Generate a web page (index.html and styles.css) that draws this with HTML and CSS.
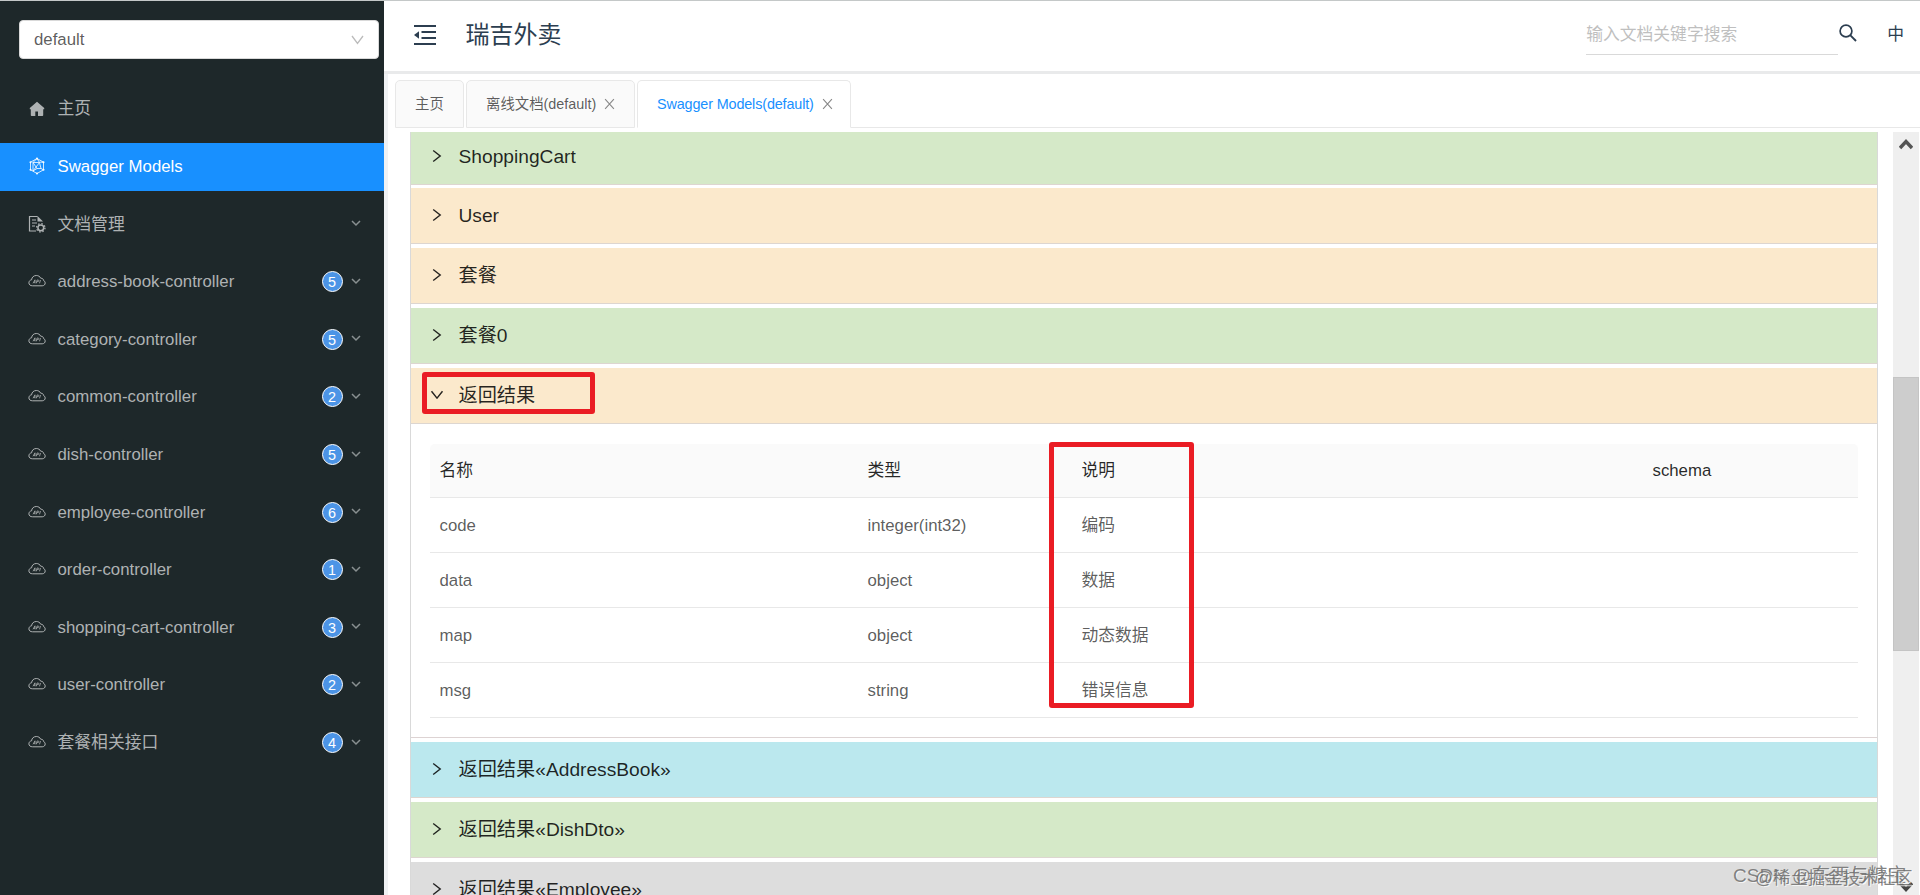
FILE: index.html
```html
<!DOCTYPE html>
<html lang="zh">
<head>
<meta charset="utf-8">
<title>瑞吉外卖</title>
<link rel="stylesheet" href="styles.css">
</head>
<body>
<svg class="defs" aria-hidden="true">
  <symbol id="cloud" viewBox="0 0 18 14"><path d="M4.600 11.800C2.300 11.800.9 10.600.9 8.900.9 7.200 2 6 3.600 5.800 3.700 3.200 5.800 1.500 8.300 1.500c2 0 3.700 1 4.400 2.700 1.800 0 2.900 1 3 2.500 1 .4 1.500 1.200 1.500 2.200 0 1.700-1.200 2.900-3 2.900z" fill="none" stroke="currentColor"/><path d="M5 9.300 7 5.800v3.500M5.800 8.200H7M8.300 9.300 9.100 6h1c1 0 .9 1.600-.2 1.600H8.800M11.500 9.300l1-3.300" fill="none" stroke="currentColor" stroke-width=".8"/></symbol>
  <symbol id="down" viewBox="0 0 10 10"><path d="M1 3l4 4 4-4" fill="none" stroke="currentColor" stroke-width="1.500"/></symbol>
  <symbol id="right" viewBox="0 0 10 14"><path d="M1.200 1.500 8.200 7 1.200 12.500" fill="none" stroke="currentColor" stroke-width="1.400"/></symbol>
  <symbol id="close" viewBox="0 0 12 12"><path d="M1.200.8l9.600 10.400M10.800.8 1.200 11.200" fill="none" stroke="currentColor" stroke-width="1.200"/></symbol>
</svg>
<div class="app">
  <aside class="sidebar">
    <div class="select"><span>default</span><svg width="13" height="10" viewBox="0 0 13 10"><path d="M1 1l5.500 7.500L12 1" fill="none" stroke="currentColor" stroke-width="1.300"/></svg></div>
    <nav class="menu">
      <a class="item"><svg class="icon" viewBox="0 0 18 18"><path d="M9 1.800 1.800 8v1.200h1v6q0 .8.800.8h3.700v-4.500h2.700V16h4.400q.8 0 .8-.8v-6h1V8z" fill="currentColor"/></svg><span class="label">主页</span></a>
      <a class="item active"><svg class="icon" viewBox="0 0 18 18"><path d="M9 1.500 15.500 5.200v7.600L9 16.500 2.500 12.800V5.200zM5 5.500h6.500l1.500 6H9L5 14zM5 5.500l4 6M11.500 5.500 5 14M9 1.500l-4 4M9 1.500l2.500 4M15.500 5.200h-4M13 11.500l2.500 1.300" fill="none" stroke="currentColor" stroke-width=".8"/><circle cx="2.500" cy="5.200" r="1" fill="currentColor"/><circle cx="15.500" cy="5.200" r="1" fill="currentColor"/><circle cx="9" cy="1.500" r="1" fill="currentColor"/><circle cx="9" cy="16.500" r="1" fill="currentColor"/><circle cx="2.500" cy="12.800" r="1" fill="currentColor"/><circle cx="15.500" cy="12.800" r="1" fill="currentColor"/></svg><span class="label">Swagger Models</span></a>
      <a class="item"><svg class="icon" viewBox="0 0 18 18"><path d="M8 16H1.500V1.500h8M4 5h4M4 8h5M4 11h3" fill="none" stroke="currentColor" stroke-width="1.200"/><path d="M9.500 1v5.500h5.500z" fill="currentColor"/><circle cx="12.800" cy="12.800" r="2.900" fill="none" stroke="currentColor" stroke-width="1.500"/><circle cx="12.800" cy="12.800" r="4.200" fill="none" stroke="currentColor" stroke-width="1.300" stroke-dasharray="1.500 1.800"/></svg><span class="label">文档管理</span><svg class="arrow"><use href="#down"/></svg></a>
      <a class="item"><svg class="icon cloud"><use href="#cloud"/></svg><span class="label">address-book-controller</span><b class="badge">5</b><svg class="arrow"><use href="#down"/></svg></a>
      <a class="item"><svg class="icon cloud"><use href="#cloud"/></svg><span class="label">category-controller</span><b class="badge">5</b><svg class="arrow"><use href="#down"/></svg></a>
      <a class="item"><svg class="icon cloud"><use href="#cloud"/></svg><span class="label">common-controller</span><b class="badge">2</b><svg class="arrow"><use href="#down"/></svg></a>
      <a class="item"><svg class="icon cloud"><use href="#cloud"/></svg><span class="label">dish-controller</span><b class="badge">5</b><svg class="arrow"><use href="#down"/></svg></a>
      <a class="item"><svg class="icon cloud"><use href="#cloud"/></svg><span class="label">employee-controller</span><b class="badge">6</b><svg class="arrow"><use href="#down"/></svg></a>
      <a class="item"><svg class="icon cloud"><use href="#cloud"/></svg><span class="label">order-controller</span><b class="badge">1</b><svg class="arrow"><use href="#down"/></svg></a>
      <a class="item"><svg class="icon cloud"><use href="#cloud"/></svg><span class="label">shopping-cart-controller</span><b class="badge">3</b><svg class="arrow"><use href="#down"/></svg></a>
      <a class="item"><svg class="icon cloud"><use href="#cloud"/></svg><span class="label">user-controller</span><b class="badge">2</b><svg class="arrow"><use href="#down"/></svg></a>
      <a class="item"><svg class="icon cloud"><use href="#cloud"/></svg><span class="label">套餐相关接口</span><b class="badge">4</b><svg class="arrow"><use href="#down"/></svg></a>
    </nav>
  </aside>
  <main class="main">
    <header class="header">
      <svg class="fold" width="22" height="20" viewBox="0 0 22 20"><path d="M0 1h22M7.500 7h14.500M7.500 13h14.500M0 19h22" stroke="currentColor" stroke-width="1.900"/><path d="M0 10l5-3.700v7.400z" fill="currentColor"/></svg>
      <h1 class="title">瑞吉外卖</h1>
      <div class="search">输入文档关键字搜索</div>
      <svg class="loupe" width="18" height="18" viewBox="0 0 18 18"><circle cx="7" cy="7" r="5.900" fill="none" stroke="currentColor" stroke-width="1.700"/><path d="M11.200 11.200 17 17" stroke="currentColor" stroke-width="1.900"/></svg>
      <span class="lang">中</span>
    </header>
    <div class="tabs">
      <div class="tab home">主页</div>
      <div class="tab doc">离线文档(default)<svg class="x"><use href="#close"/></svg></div>
      <div class="tab current">Swagger Models(default)<svg class="x"><use href="#close"/></svg></div>
      <div class="rest"></div>
    </div>
    <div class="viewport">
      <div class="panels">
        <section class="panel green first"><svg class="caret"><use href="#right"/></svg>ShoppingCart</section>
        <section class="panel orange"><svg class="caret"><use href="#right"/></svg>User</section>
        <section class="panel orange"><svg class="caret"><use href="#right"/></svg>套餐</section>
        <section class="panel green"><svg class="caret"><use href="#right"/></svg>套餐0</section>
        <section class="panel orange open"><svg class="caret"><use href="#right"/></svg>返回结果<i class="mark mark-title"></i></section>
        <div class="content">
          <div class="table">
            <div class="row head"><span>名称</span><span>类型</span><span>说明</span><span>schema</span></div>
            <div class="row"><span>code</span><span>integer(int32)</span><span>编码</span><span></span></div>
            <div class="row"><span>data</span><span>object</span><span>数据</span><span></span></div>
            <div class="row"><span>map</span><span>object</span><span>动态数据</span><span></span></div>
            <div class="row"><span>msg</span><span>string</span><span>错误信息</span><span></span></div>
            <i class="mark mark-column"></i>
          </div>
        </div>
        <section class="panel blue"><svg class="caret"><use href="#right"/></svg>返回结果«AddressBook»</section>
        <section class="panel green"><svg class="caret"><use href="#right"/></svg>返回结果«DishDto»</section>
        <section class="panel gray"><svg class="caret"><use href="#right"/></svg>返回结果«Employee»</section>
      </div>
      <div class="scrollbar">
        <svg width="14" height="12" viewBox="0 0 14 12"><path d="M1 10l6-6.500L13 10" fill="none" stroke="#555" stroke-width="3.400"/></svg>
        <div class="thumb"></div>
        <svg class="to-end" width="14" height="12" viewBox="0 0 14 12"><path d="M1 2l6 6.500L13 2" fill="none" stroke="#444" stroke-width="3.400"/></svg>
      </div>
    </div>
  </main>
  <div class="wm wm-a">CSDN @东西与糖宝</div>
  <div class="wm wm-b">@稀土掘金技术社区</div>
</div>
</body>
</html>
```
FILE: styles.css
```css
* { box-sizing: border-box; }
body { margin: 0; font-family: "Liberation Sans", "Noto Sans CJK SC", sans-serif; font-size: 16.8px; line-height: 1.5; color: rgba(0,0,0,.65); }
.defs { position: absolute; width: 0; height: 0; }
.app { position: relative; display: flex; width: 1920px; height: 895px; overflow: hidden; border-top: 1px solid #c4c8c8; background: #fff; }

.sidebar { width: 384px; flex: none; background: #1e282a; padding-top: 19px; }
.select { display: flex; align-items: center; justify-content: space-between; height: 39px; margin: 0 5px 0 19px; padding: 0 14px 0 14px; border: 1px solid #d9d9d9; border-radius: 4px; background: #fff; }
.select svg { color: #bbb; }
.menu { display: flex; flex-direction: column; gap: 9.6px; margin-top: 26px; }
.item { display: flex; align-items: center; height: 48px; flex: none; padding: 0 23px 0 28px; color: #aeb2b3; }
.item.active { background: #1890ff; color: #fff; }
.icon { width: 18px; height: 18px; flex: none; margin: 0 11.5px 1px 0; }
.cloud { height: 14px; }
.label { flex: 1; letter-spacing: .02px; }
.badge { width: 21px; height: 21px; margin-right: 8.5px; border: 1px solid #fff; border-radius: 50%; background: #4c94e6; color: #fff; font-size: 14.4px; font-weight: 400; line-height: 20px; text-align: center; }
.arrow { width: 10px; height: 10px; margin-bottom: 2px; color: #899091; }

.main { flex: 1; min-width: 0; display: flex; flex-direction: column; border-left: 4px solid #f0f2f4; }
.header { display: flex; align-items: center; height: 73px; flex: none; margin-left: -4px; padding: 0 16px 3px 30px; border-bottom: 3px solid #e9eaeb; background: #fff; color: #2c3e50; }
.fold { margin-top: 1px; }
.title { margin: 1px auto 0 29.5px; font-size: 24px; font-weight: 400; line-height: 36px; }
.search { width: 252px; height: 38px; margin-top: 3px; border-bottom: 1px solid #d9d9d9; color: #bfbfbf; line-height: 36px; }
.loupe { margin: 0 30px 3px 1px; }
.lang { margin-top: 1px; }

.tabs { display: flex; height: 54px; flex: none; padding-top: 6px; margin-left: 7px; font-size: 14.4px; }
.tab { display: flex; align-items: center; height: 48px; padding: 1px 0 0 19px; border: 1px solid #e8e8e8; border-radius: 5px 5px 0 0; background: #fafafa; margin-right: 2px; }
.home { width: 69px; }
.doc { width: 169px; }
.current { width: 214px; margin: 0; background: #fff; border-bottom-color: #fff; color: #1890ff; letter-spacing: -.14px; }
.rest { flex: 1; border-bottom: 1px solid #e8e8e8; }
.x { width: 11px; height: 12px; margin: 0 0 1px 8px; color: #888; }

.viewport { display: flex; flex: 1; min-height: 0; margin-top: 4px; padding-left: 22px; }
.panels { width: 1468px; flex: none; overflow: hidden; border: solid #d9d9d9; border-width: 0 1px; }
.panel { position: relative; display: flex; align-items: center; height: 56px; margin-bottom: 4px; padding: 1px 0 0 21px; border-bottom: 1px solid #ddd6d0; color: rgba(0,0,0,.85); font-size: 19.2px; }
.first { height: 53px; padding-bottom: 3px; margin-bottom: 3px; }
.caret { width: 10px; height: 14px; margin: 0 16.5px 2px 0; }
.green { background: #d5e9c8; }
.orange { background: #fbe9cc; }
.blue { background: #bbe8ee; }
.gray { background: #ddd; }
.open { margin-bottom: 0; }
.open .caret { transform: rotate(90deg); }
.content { height: 314px; padding: 20px 19px; margin-bottom: 4px; border-bottom: 1px solid #ddd3d3; }
.table { position: relative; }
.row { display: grid; grid-template-columns: 428px 214px 571px 1fr; align-items: center; height: 55px; padding: 1px 0 0 9.500px; border-bottom: 1px solid #e8e8e8; }
.head { height: 54px; padding-top: 0; background: #fafafa; border-radius: 5px 5px 0 0; color: rgba(0,0,0,.85); }
.mark { position: absolute; border: 5px solid #ea1c24; border-radius: 3px; }
.mark-title { left: 11px; top: 4px; width: 173px; height: 42px; }
.mark-column { left: 619px; top: -2px; width: 145px; height: 266px; }

.scrollbar { display: flex; flex-direction: column; align-items: center; width: 26px; margin-left: 15px; padding: 6px 0 2px; background: #efefef; }
.thumb { width: 26px; height: 274px; margin-top: 227px; border: 1px solid #c4c4c4; background: #cdcdcd; }
.to-end { margin-top: auto; }

.wm { position: absolute; white-space: nowrap; color: rgba(110,110,110,.85); text-shadow: 1px 1px 0 rgba(255,255,255,.7); }
.wm-a { left: 1733px; top: 861px; font-size: 19px; }
.wm-b { left: 1755px; top: 864px; font-size: 17.500px; }
```
